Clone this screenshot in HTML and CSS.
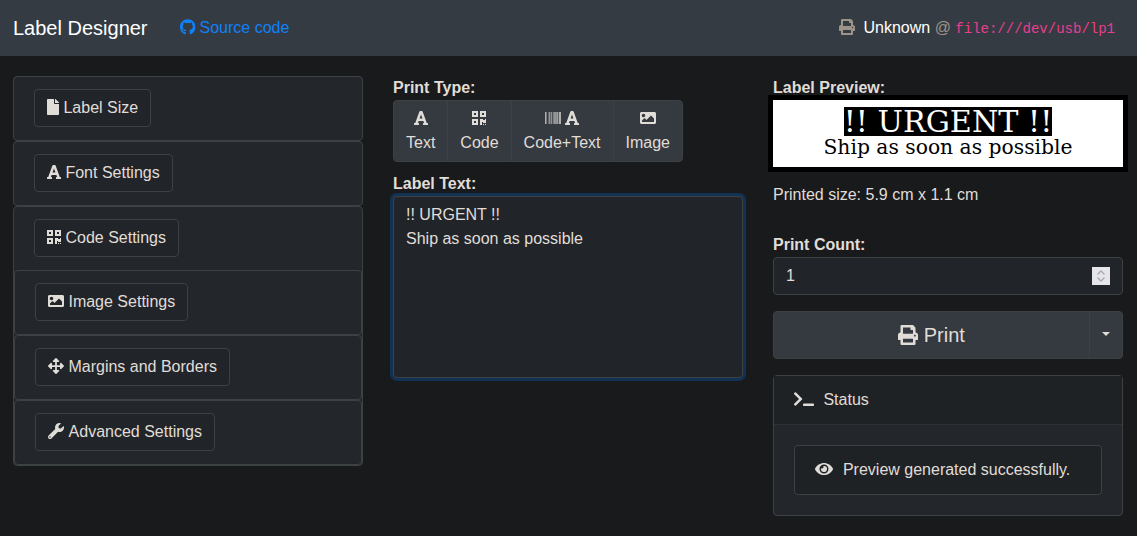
FILE: index.html
```html
<!doctype html>
<html>
<head>
<meta charset="utf-8">
<title>Label Designer</title>
<link rel="stylesheet" href="styles.css">
</head>
<body>
<svg class="sprite" xmlns="http://www.w3.org/2000/svg">
	<symbol id="i-file" viewBox="0 0 384 512"><path d="M224 136V0H24C10.7 0 0 10.7 0 24v464c0 13.3 10.7 24 24 24h336c13.3 0 24-10.7 24-24V160H248c-13.2 0-24-10.8-24-24zm160-14.1v6.1H256V0h6.1c6.4 0 12.5 2.5 17 7l97.9 98c4.5 4.5 7 10.6 7 16.9z"/></symbol>
	<symbol id="i-font" viewBox="0 0 448 512"><path d="M432 416h-23.41L277.88 53.69A32 32 0 0 0 247.58 32h-47.16a32 32 0 0 0-30.3 21.69L39.41 416H16a16 16 0 0 0-16 16v32a16 16 0 0 0 16 16h128a16 16 0 0 0 16-16v-32a16 16 0 0 0-16-16h-19.58l23.3-64h152.56l23.3 64H304a16 16 0 0 0-16 16v32a16 16 0 0 0 16 16h128a16 16 0 0 0 16-16v-32a16 16 0 0 0-16-16zM176.85 272L224 142.51 271.15 272z"/></symbol>
	<symbol id="i-qr" viewBox="0 0 448 512"><path d="M0 224h192V32H0v192zM64 96h64v64H64V96zm192-64v192h192V32H256zm128 128h-64V96h64v64zM0 480h192V288H0v192zm64-128h64v64H64v-64zm352-64h32v128h-96v-32h-32v96h-64V288h96v32h64v-32zm0 160h32v32h-32v-32zm-64 0h32v32h-32v-32z"/></symbol>
	<symbol id="i-image" viewBox="0 0 512 512"><path d="M464 448H48c-26.51 0-48-21.49-48-48V112c0-26.51 21.49-48 48-48h416c26.51 0 48 21.49 48 48v288c0 26.51-21.49 48-48 48zM112 120c-30.928 0-56 25.072-56 56s25.072 56 56 56 56-25.072 56-56-25.072-56-56-56zM64 384h384V272l-87.515-87.515c-4.686-4.686-12.284-4.686-16.971 0L208 320l-55.515-55.515c-4.686-4.686-12.284-4.686-16.971 0L64 336v48z"/></symbol>
	<symbol id="i-move" viewBox="0 0 512 512"><path d="M352.201 425.775l-79.196 79.196c-9.373 9.373-24.568 9.373-33.941 0l-79.196-79.196c-15.119-15.119-4.411-40.971 16.971-40.97h51.162L228 284H127.196v51.162c0 21.382-25.851 32.09-40.971 16.971L7.029 272.937c-9.373-9.373-9.373-24.569 0-33.941L86.225 159.8c15.119-15.119 40.971-4.411 40.971 16.971V228H228V127.196h-51.23c-21.382 0-32.09-25.851-16.971-40.971l79.196-79.196c9.373-9.373 24.568-9.373 33.941 0l79.196 79.196c15.119 15.119 4.411 40.971-16.971 40.971h-51.162V228h100.804v-51.162c0-21.382 25.851-32.09 40.97-16.971l79.196 79.196c9.373 9.373 9.373 24.569 0 33.941L425.773 352.2c-15.119 15.119-40.971 4.411-40.97-16.971V284H284v100.804h51.23c21.382 0 32.09 25.851 16.971 40.971z"/></symbol>
	<symbol id="i-wrench" viewBox="0 0 512 512"><path d="M507.73 109.1c-2.24-9.03-13.54-12.09-20.12-5.51l-74.36 74.36-67.88-11.31-11.31-67.88 74.36-74.36c6.62-6.62 3.43-17.9-5.66-20.16-47.38-11.74-99.55.91-136.58 37.93-39.64 39.64-50.55 97.1-34.05 147.2L18.74 402.76c-24.99 24.99-24.99 65.51 0 90.5 24.99 24.99 65.51 24.99 90.5 0l213.21-213.21c50.12 16.71 107.47 5.68 147.37-34.22 37.07-37.07 49.7-89.32 37.91-136.73zM64 472c-13.25 0-24-10.75-24-24 0-13.26 10.75-24 24-24s24 10.74 24 24c0 13.25-10.75 24-24 24z"/></symbol>
	<symbol id="i-print" viewBox="0 0 512 512"><path d="M448 192V77.25c0-8.49-3.37-16.62-9.37-22.63L393.37 9.37c-6-6-14.14-9.37-22.63-9.37H96C78.33 0 64 14.33 64 32v160c-35.35 0-64 28.65-64 64v112c0 8.84 7.16 16 16 16h48v96c0 17.67 14.33 32 32 32h320c17.67 0 32-14.33 32-32v-96h48c8.84 0 16-7.16 16-16V256c0-35.35-28.65-64-64-64zm-64 256H128v-96h256v96zm0-224H128V64h192v48c0 8.84 7.16 16 16 16h48v96zm48 72c-13.25 0-24-10.75-24-24 0-13.26 10.75-24 24-24s24 10.74 24 24c0 13.25-10.75 24-24 24z"/></symbol>
	<symbol id="i-terminal" viewBox="0 0 640 512"><path d="M257.981 272.971L63.638 467.314c-9.373 9.373-24.569 9.373-33.941 0L7.029 444.647c-9.357-9.357-9.375-24.522-.04-33.901L161.011 256 6.99 101.255c-9.335-9.379-9.317-24.544.04-33.901l22.667-22.667c9.373-9.373 24.569-9.373 33.941 0L257.981 239.03c9.373 9.372 9.373 24.568 0 33.941zM640 456v-32c0-13.255-10.745-24-24-24H312c-13.255 0-24 10.745-24 24v32c0 13.255 10.745 24 24 24h304c13.255 0 24-10.745 24-24z"/></symbol>
	<symbol id="i-eye" viewBox="0 0 576 512"><path d="M572.52 241.4C518.29 135.59 410.93 64 288 64S57.68 135.64 3.48 241.41a32.35 32.35 0 0 0 0 29.19C57.71 376.41 165.07 448 288 448s230.32-71.64 284.52-177.41a32.35 32.35 0 0 0 0-29.19zM288 400a144 144 0 1 1 144-144 143.93 143.93 0 0 1-144 144zm0-240a95.31 95.31 0 0 0-25.31 3.79 47.85 47.85 0 0 1-66.9 66.9A95.78 95.78 0 1 0 288 160z"/></symbol>
	<symbol id="i-barcode" viewBox="0 0 512 512"><path d="M0 448V64h18v384H0zm26.857-.273V64H36v383.727h-9.143zm27.143 0V64h8.857v383.727H54zm44.857 0V64h8.857v383.727h-8.857zm36 0V64h17.714v383.727h-17.714zm44.857 0V64h8.857v383.727h-8.857zm18 0V64h8.857v383.727h-8.857zm18 0V64h8.857v383.727h-8.857zm35.715 0V64h18v383.727h-18zm44.857 0V64h18v383.727h-18zm35.999 0V64h18.001v383.727h-18.001zm36.001 0V64h18.001v383.727h-18.001zm26.857 0V64h18v383.727h-18zm45.143 0V64h26.857v383.727h-26.857zm35.714 0V64h9.143v383.727H476zm18 .273V64h18v384h-18z"/></symbol>
	<symbol id="i-github" viewBox="0 0 496 512"><path d="M165.9 397.4c0 2-2.3 3.6-5.2 3.6-3.3 0-5.6-1.6-5.6-3.6 0-2 2.3-3.6 5.2-3.6 3-.3 5.6 1.3 5.6 3.6zm-31.1-4.5c-.7 2 1.3 4.3 4.3 4.9 2.6 1 5.6 0 6.2-2s-1.3-4.3-4.3-5c-2.6-.7-5.5.3-6.2 2.1zm44.2-1.7c-2.9.7-4.9 2.6-4.6 4.9.3 2 2.9 3.3 5.9 2.6 2.9-.7 4.9-2.6 4.6-4.6-.3-1.9-3-3.2-5.9-2.9zM244.8 8C106.1 8 0 113.3 0 252c0 110.9 69.8 205.8 169.5 239.2 12.8 2.3 17.3-5.6 17.3-12.1 0-6.2-.3-40.4-.3-61.4 0 0-70 15-84.7-29.8 0 0-11.4-29.1-27.8-36.6 0 0-22.9-15.7 1.6-15.4 0 0 24.9 2 38.6 25.8 21.9 38.6 58.6 27.5 72.9 20.9 2.3-16 8.8-27.1 16-33.7-55.9-6.2-112.3-14.3-112.3-110.5 0-27.5 7.6-41.3 23.6-58.9-2.6-6.5-11.1-33.3 2.6-67.9 20.9-6.5 69 27 69 27 20-5.6 41.5-8.5 62.8-8.5s42.8 2.9 62.8 8.5c0 0 48.1-33.6 69-27 13.7 34.7 5.2 61.4 2.6 67.9 16 17.7 25.8 31.5 25.8 58.9 0 96.5-58.9 104.2-114.8 110.5 9.2 7.9 17 22.9 17 46.4 0 33.7-.3 75.4-.3 83.6 0 6.5 4.6 14.4 17.3 12.1C428.2 457.8 496 362.9 496 252 496 113.3 383.5 8 244.8 8z"/></symbol>
</svg>

<nav class="navbar">
	<span class="brand">Label Designer</span>
	<a class="source-link" href="#"><svg class="fa w-15"><use href="#i-github"/></svg> Source code</a>
	<span class="printer-info">
		<svg class="fa w-16 muted"><use href="#i-print"/></svg>
		<span class="printer-name">Unknown</span> <span class="muted">@</span> <code>file:///dev/usb/lp1</code>
	</span>
</nav>

<main class="columns">
	<section class="settings">
		<div class="card"><button class="btn"><svg class="fa w-12"><use href="#i-file"/></svg> Label Size</button></div>
		<div class="card"><button class="btn"><svg class="fa w-14"><use href="#i-font"/></svg> Font Settings</button></div>
		<div class="card card-outer">
			<button class="btn"><svg class="fa w-14"><use href="#i-qr"/></svg> Code Settings</button>
			<div class="card card-inner"><button class="btn"><svg class="fa w-16"><use href="#i-image"/></svg> Image Settings</button></div>
			<div class="card card-inner"><button class="btn"><svg class="fa w-16"><use href="#i-move"/></svg> Margins and Borders</button></div>
			<div class="card card-inner"><button class="btn"><svg class="fa w-16 wrench"><use href="#i-wrench"/></svg> Advanced Settings</button></div>
		</div>
	</section>

	<section class="editor">
		<label class="field-label">Print Type:</label>
		<div class="type-group">
			<button class="type-btn"><svg class="fa w-14"><use href="#i-font"/></svg><br>Text</button>
			<button class="type-btn"><svg class="fa w-14"><use href="#i-qr"/></svg><br>Code</button>
			<button class="type-btn"><svg class="fa w-16"><use href="#i-barcode"/></svg> <svg class="fa w-14"><use href="#i-font"/></svg><br>Code+Text</button>
			<button class="type-btn"><svg class="fa w-16"><use href="#i-image"/></svg><br>Image</button>
		</div>
		<label class="field-label label-text">Label Text:</label>
		<textarea class="text-input" spellcheck="false">!! URGENT !!
Ship as soon as possible</textarea>
	</section>

	<section class="output">
		<label class="field-label">Label Preview:</label>
		<div class="preview">
			<span class="preview-big">!! URGENT !!</span>
			<span class="preview-small">Ship as soon as possible</span>
		</div>
		<p class="printed-size">Printed size: 5.9 cm x 1.1 cm</p>
		<label class="field-label">Print Count:</label>
		<div class="count-wrap">
			<input class="count-input" type="number" value="1" min="1">
			<svg class="spinner" viewBox="0 0 18 18"><path d="M5.500 7.500L9 4l3.500 3.500M5.500 10.500L9 14l3.500-3.500"/></svg>
		</div>
		<div class="print-group">
			<button class="print-btn"><svg class="fa w-16"><use href="#i-print"/></svg> Print</button>
			<button class="print-toggle"><span class="caret"></span></button>
		</div>
		<div class="status">
			<div class="status-head"><svg class="fa w-20"><use href="#i-terminal"/></svg> Status</div>
			<div class="status-body">
				<div class="alert"><svg class="fa w-18"><use href="#i-eye"/></svg> Preview generated successfully.</div>
			</div>
		</div>
	</section>
</main>
</body>
</html>
```

FILE: styles.css
```css
* {box-sizing:border-box;}
html, body {margin:0; padding:0; height:100%; overflow:hidden;}
body {background:#181a1b; color:#e0ddd8; font:16px/24px "Liberation Sans", Arial, sans-serif;}
button, input, textarea {font:inherit; color:inherit; margin:0;}
.sprite {display:none;}

/* icons, same widths as the icon font classes */
.fa {height:1em; vertical-align:-0.125em; fill:currentColor; overflow:visible;}
.w-12 {width:.75em;}
.w-14 {width:.875em;}
.w-15 {width:.97em;}
.w-16 {width:1em;}
.w-18 {width:1.125em;}
.w-20 {width:1.25em;}
.muted {color:#9d9488;}
.wrench {margin-right:1px;}

.navbar {height:56px; background:#353b43; padding:0 22px 0 13px; display:flex; align-items:center;}
.brand {font-size:20px; color:#fff; margin-right:32px;}
.source-link {color:#0f81f7; text-decoration:none;}
.printer-info {margin-left:auto; color:#fff;}
.printer-info .fa {margin-right:4px;}
code {font:14px "Liberation Mono", monospace; color:#e83e8c;}

.columns {display:grid; grid-template-columns:repeat(3, 350px); column-gap:30px; padding:20px 14px 0 13px;}

.card {background:#23272b; border:1px solid #3c4144; border-radius:4px; padding:12px 20px 13px; height:65px;}
.card-outer {height:auto; padding:12px 0 0;}
.card-outer > .btn {margin-left:20px; margin-bottom:13px; display:block;}

.btn {background:#212529; border:1px solid #3c4144; border-radius:4px; height:38px; padding:6px 12px; white-space:nowrap; line-height:24px;}

.field-label {display:block; font-weight:700; height:24px;}
.type-group {display:flex; width:max-content; height:62px; margin-bottom:10px; border:1px solid #3c4144; border-radius:4px; background:#343a40;}
.type-btn {background:none; border:0; border-left:1px solid #3c4144; padding:6px 12px; line-height:24px; white-space:nowrap;}
.type-btn:first-child {border-left:0;}

.text-input {display:block; width:350px; height:182px; resize:none; background:#212529; border:1px solid #3c4144; border-radius:4px; padding:6px 12px; outline:0; box-shadow:0 0 0 3px rgba(0,123,255,.25);}

.preview {height:67px; width:350px; background:#fff; outline:5px solid #000; display:flex; flex-direction:column; align-items:center; padding-top:7px; font-family:"DejaVu Serif", serif; color:#000;}
.preview-big {background:#000; color:#fff; font-size:30.2px; line-height:29px; white-space:nowrap;}
.preview-small {font-size:20.3px; line-height:23px; white-space:nowrap;}
.printed-size {margin:16px 0 26px;}

.count-wrap {position:relative;}
.count-input {display:block; width:350px; height:38px; background:#212529; border:1px solid #3c4144; border-radius:4px; padding:6px 12px; outline:0;}
.count-input::-webkit-inner-spin-button {display:none;}
.spinner {position:absolute; right:13px; top:10px; width:18px; height:18px; background:#e6e5ec; fill:none; stroke:#a9a8b4; stroke-width:1.3;}

.print-group {display:flex; height:48px; margin:16px 0; background:#343a40; border:1px solid #3c4144; border-radius:4px;}
.print-btn {flex:1; background:none; border:0; font-size:20px; padding:0;}
.print-toggle {width:33px; background:none; border:0; border-left:1px solid #3c4144; padding:0;}
.caret {display:block; width:0; margin:0 auto 3px; border-top:4.8px solid #e0ddd8; border-left:4.8px solid transparent; border-right:4.8px solid transparent;}

.status {background:#23272b; border:1px solid #3c4144; border-radius:4px;}
.status-head {height:49px; padding:12px 20px; background:#1f2225; border-bottom:1px solid #2d3134;}
.status-head .fa {margin-right:5px;}
.status-body {padding:20px;}
.alert {height:50px; padding:12px 20px; background:#1f2225; border:1px solid #3c4144; border-radius:4px;}
.alert .fa {margin-right:5.5px;}
```
